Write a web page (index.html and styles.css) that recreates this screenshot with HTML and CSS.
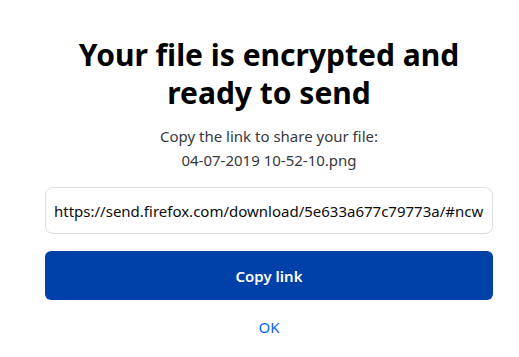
FILE: index.html
```html
<!DOCTYPE html>
<html>
<head>
<meta charset="utf-8">
<link rel="stylesheet" href="styles.css">
</head>
<body>
<main class="panel">
  <h1 class="title">Your file is encrypted and ready to send</h1>
  <p class="subtitle">Copy the link to share your file:<br>04-07-2019 10-52-10.png</p>
  <input class="link" type="text" readonly value="https://send.firefox.com/download/5e633a677c79773a/#ncwKsQ7yY9BfRzT3Qx">
  <button class="copy">Copy link</button>
  <a class="ok" href="#">OK</a>
</main>
</body>
</html>
```

FILE: styles.css
```css
html, body {
  margin: 0;
  padding: 0;
  background: #ffffff;
}
body {
  font-family: "Noto Sans", "Open Sans", sans-serif;
  color: #0c0c0d;
}
.panel {
  display: flex;
  flex-direction: column;
  align-items: stretch;
  padding: 36px 26px 0 45px;
}
.title {
  margin: 0;
  font-size: 30px;
  line-height: 38px;
  font-weight: 700;
  text-align: center;
  color: #000000;
}
.subtitle {
  margin: 12px 0 0;
  font-size: 15px;
  line-height: 24px;
  text-align: center;
  color: #38383d;
}
.link {
  margin-top: 15px;
  height: 47px;
  box-sizing: border-box;
  border: 1px solid #dcdee3;
  border-radius: 8px;
  padding: 0 8px;
  font-family: inherit;
  font-size: 15px;
  color: #0c0c0d;
  outline: none;
}
.copy {
  margin-top: 17px;
  height: 49px;
  border: none;
  border-radius: 6px;
  background: #0041a9;
  color: #ffffff;
  font-family: inherit;
  font-size: 15px;
  font-weight: 600;
}
.ok {
  margin-top: 17px;
  line-height: 20px;
  align-self: center;
  font-size: 15px;
  color: #0a64ff;
  text-decoration: none;
}
```
